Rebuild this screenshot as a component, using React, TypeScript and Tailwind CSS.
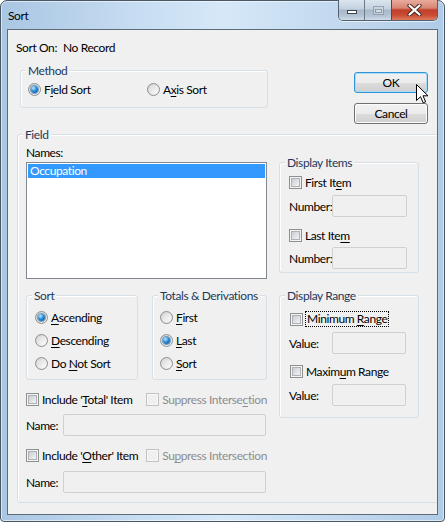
import React from "react";

type Kids = { children?: React.ReactNode; className?: string };

function U({ children }: Kids) {
  return <span className="underline decoration-1 underline-offset-[2px]">{children}</span>;
}

function Group({ label, className = "", children }: Kids & { label: string }) {
  return (
    <div className={`relative shrink-0 rounded-[3px] border border-[#d5dfe5] shadow-[inset_1px_1px_0_#ffffff] ${className}`}>
      <span className="absolute -top-[8px] left-[5px] bg-[#f0f0f0] px-[2px] text-[#1e395b]">{label}</span>
      {children}
    </div>
  );
}

function Radio({ checked = false, className = "", children }: Kids & { checked?: boolean }) {
  return (
    <div className={`flex h-[15px] items-center ${className}`}>
      <span className="flex h-[13px] w-[13px] shrink-0 items-center justify-center rounded-full border border-[#8e8f8f] bg-[linear-gradient(135deg,#cfcfcf,#f7f7f7)]">
        {checked ? (
          <span className="h-[7px] w-[7px] rounded-full bg-[radial-gradient(circle_at_35%_30%,#c4e8ff_0%,#2a8ad4_45%,#0d4a86_100%)] shadow-[0_0_0_1px_#6c9cc4]" />
        ) : (
          <span className="h-[9px] w-[9px] rounded-full bg-[linear-gradient(135deg,#d9d9d9,#fbfbfb)]" />
        )}
      </span>
      <span className="ml-[3px]">{children}</span>
    </div>
  );
}

function Check({ disabled = false, className = "", children }: Kids & { disabled?: boolean }) {
  return (
    <div className={`flex h-[15px] items-center ${className}`}>
      <span
        className={`flex h-[13px] w-[13px] shrink-0 items-center justify-center border ${
          disabled ? "border-[#c2c2c2] bg-[#f7f7f7]" : "border-[#8e8f8f] bg-[#f4f4f4]"
        }`}
      >
        <span
          className={`h-[9px] w-[9px] ${
            disabled ? "bg-[#f0f0f0]" : "border border-[#aeb2b7] bg-[linear-gradient(135deg,#c9cdd3,#f3f4f5)]"
          }`}
        />
      </span>
      <span className={`ml-[3px] ${disabled ? "text-[#8d8d8d]" : ""}`}>{children}</span>
    </div>
  );
}

function Entry({ label, labelW, boxW, className = "" }: { label: string; labelW: string; boxW: string; className?: string }) {
  return (
    <div className={`flex items-center ${className}`}>
      <span className={`shrink-0 ${labelW}`}>{label}</span>
      <div className={`h-[22px] shrink-0 rounded-[2px] border border-[#d0d0d0] bg-[#f0f0f0] ${boxW}`} />
    </div>
  );
}

function Btn({ primary = false, children }: Kids & { primary?: boolean }) {
  return (
    <div
      className={`flex h-[21px] w-[74px] items-center justify-center rounded-[3px] border bg-[linear-gradient(#f2f2f2_0%,#ebebeb_50%,#dddddd_50%,#cfcfcf_100%)] ${
        primary ? "border-[#2f94d8] shadow-[inset_0_0_0_1px_#a9dcf6]" : "border-[#707070] shadow-[inset_0_0_0_1px_#fbfbfb]"
      }`}
    >
      {children}
    </div>
  );
}

function CaptionButtons() {
  return (
    <div className="-mt-[1px] flex h-[21px] overflow-hidden rounded-b-[5px] border border-t-0 border-[#53606e] shadow-[0_1px_0_rgba(255,255,255,0.6)]">
      <div className="flex w-[25px] items-end justify-center bg-[linear-gradient(#dbe5ef_0%,#c4d1de_45%,#a8b8c8_50%,#b5c5d5_80%,#cfdbe7_100%)] pb-[6px]">
        <span className="h-[4px] w-[10px] border border-[#3b4450] bg-white" />
      </div>
      <div className="flex w-[27px] items-center justify-center border-l border-[#6d7a88] bg-[linear-gradient(#dbe5ef_0%,#c4d1de_45%,#a8b8c8_50%,#b5c5d5_80%,#cfdbe7_100%)]">
        <span className="flex h-[9px] w-[11px] items-end justify-center border border-[#8a97a5] bg-[#c8d4e0] pb-[1px] opacity-80">
          <span className="h-[4px] w-[7px] border border-[#8a97a5] bg-[#dde6ee]" />
        </span>
      </div>
      <div className="flex w-[46px] items-center justify-center border-l border-[#6d4038] bg-[linear-gradient(#e8ab9c_0%,#d88573_40%,#c0402b_50%,#c84b33_75%,#de7b5f_100%)]">
        <svg width="15" height="12" viewBox="0 0 15 12">
          <path d="M2.5 1.5 L12.5 10.5 M12.5 1.5 L2.5 10.5" stroke="#4a2a26" strokeWidth="4.2" strokeLinecap="round" />
          <path d="M2.5 1.5 L12.5 10.5 M12.5 1.5 L2.5 10.5" stroke="#ffffff" strokeWidth="2.2" strokeLinecap="round" />
        </svg>
      </div>
    </div>
  );
}

export default function App() {
  return (
    <div className="h-[522px] w-[445px] whitespace-nowrap rounded-t-[7px] rounded-b-[4px] border border-[#4a5765] bg-[linear-gradient(90deg,#a9c6e3_0%,#c6dcf1_30%,#d6e8f8_50%,#c3d9ef_75%,#b0cbe6_100%)] font-['Lato',sans-serif] text-[12px] leading-[15px] tracking-[-0.4px] text-black shadow-[inset_0_0_0_1px_rgba(255,255,255,0.55)]">
      <div className="flex h-[28px] items-start justify-between pr-[6px]">
        <span className="pl-[7px] pt-[7px] text-[#000]">Sort</span>
        <CaptionButtons />
      </div>

      <div className="relative ml-[6px] h-[486px] w-[431px] overflow-hidden border border-[#5d6b7a] bg-[#f0f0f0]">
        <div className="flex pl-[8px] pt-[10px]">
          <span>Sort On:</span>
          <span className="ml-[6px]">No Record</span>
        </div>

        <div className="mt-[15px] flex items-start">
          <Group label="Method" className="ml-[12px] flex h-[38px] w-[248px] pl-[7px] pt-[11px]">
            <Radio checked className="w-[119px]">
              F<U>i</U>eld Sort
            </Radio>
            <Radio>
              A<U>x</U>is Sort
            </Radio>
          </Group>
          <div className="ml-auto mr-[9px] mt-[2px] flex flex-col gap-[10px]">
            <Btn primary>OK</Btn>
            <Btn>Cancel</Btn>
          </div>
        </div>

        <Group label="Field" className="ml-[9px] mt-[10px] flex h-[369px] w-[430px]">
          <div className="ml-[8px] flex w-[241px] flex-col">
            <span className="pt-[10px]">Names:</span>
            <div className="mt-[2px] h-[117px] border border-[#828790] bg-white p-[1px]">
              <div className="h-[14px] bg-[#3399ff] pl-[2px] leading-[14px] text-white">Occupation</div>
            </div>

            <div className="mt-[16px] flex">
              <Group label="Sort" className="flex h-[85px] w-[112px] flex-col gap-[8px] pl-[8px] pt-[14px]">
                <Radio checked>
                  <U>A</U>scending
                </Radio>
                <Radio>
                  <U>D</U>escending
                </Radio>
                <Radio>
                  Do <U>N</U>ot Sort
                </Radio>
              </Group>
              <Group label="Totals &amp; Derivations" className="ml-[14px] flex h-[85px] w-[115px] flex-col gap-[8px] pl-[7px] pt-[14px]">
                <Radio>
                  <U>F</U>irst
                </Radio>
                <Radio checked>
                  <U>L</U>ast
                </Radio>
                <Radio>
                  <U>S</U>ort
                </Radio>
              </Group>
            </div>

            <div className="mt-[12px] flex">
              <Check className="w-[122px]">
                Include '<U>T</U>otal' Item
              </Check>
              <Check disabled>
                Suppress Interse<U>c</U>tion
              </Check>
            </div>
            <Entry label="Name:" labelW="w-[37px]" boxW="w-[203px]" className="mt-[7px]" />

            <div className="mt-[12px] flex">
              <Check className="w-[122px]">
                Include '<U>O</U>ther' Item
              </Check>
              <Check disabled>
                Su<U>p</U>press Intersection
              </Check>
            </div>
            <Entry label="Name:" labelW="w-[37px]" boxW="w-[203px]" className="mt-[8px]" />
          </div>

          <div className="ml-[12px] flex w-[140px] flex-col">
            <Group label="Display Items" className="mt-[27px] h-[111px] pl-[9px] pt-[12px]">
              <Check>
                First It<U>e</U>m
              </Check>
              <Entry label="Number:" labelW="w-[43px]" boxW="w-[75px]" className="mt-[5px]" />
              <Check className="mt-[11px]">
                Last Ite<U>m</U>
              </Check>
              <Entry label="Number:" labelW="w-[43px]" boxW="w-[75px]" className="mt-[4px]" />
            </Group>

            <Group label="Display Range" className="mt-[22px] h-[123px] pl-[9px] pt-[15px]">
              <div className="flex h-[16px] items-center pl-[1px]">
                <span className="flex h-[13px] w-[13px] shrink-0 items-center justify-center border border-[#8e8f8f] bg-[#f4f4f4]">
                  <span className="h-[9px] w-[9px] border border-[#aeb2b7] bg-[linear-gradient(135deg,#c9cdd3,#f3f4f5)]" />
                </span>
                <span className="ml-[2px] border border-dotted border-black px-[1px] leading-[14px]">
                  Minimum <U>R</U>ange
                </span>
              </div>
              <Entry label="Value:" labelW="w-[43px]" boxW="w-[74px]" className="mt-[5px]" />
              <Check className="mt-[10px] pl-[1px]">
                Maxim<U>u</U>m Range
              </Check>
              <Entry label="Value:" labelW="w-[43px]" boxW="w-[74px]" className="mt-[5px]" />
            </Group>
          </div>
        </Group>

        <svg className="absolute left-[408px] top-[54px]" width="13" height="20" viewBox="0 0 13 20">
          <path d="M0.5 0.5 L0.5 16.5 L4.5 12.7 L7.2 18.8 L9.6 17.8 L7 11.8 L12 11.8 Z" fill="#ffffff" stroke="#000000" strokeWidth="1" strokeLinejoin="miter" />
        </svg>
      </div>
    </div>
  );
}
